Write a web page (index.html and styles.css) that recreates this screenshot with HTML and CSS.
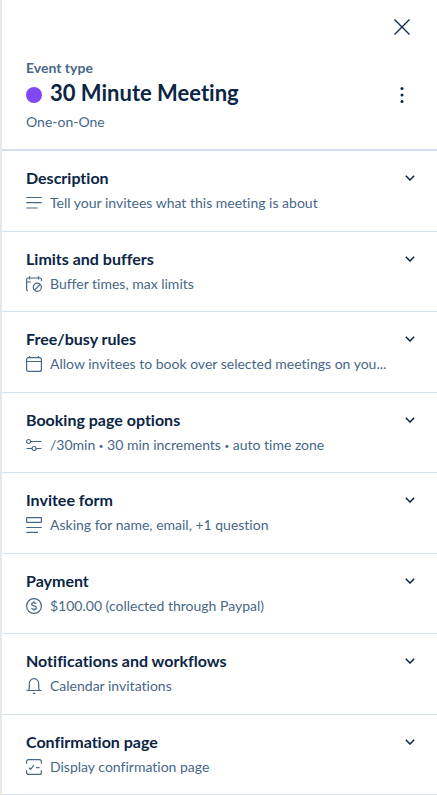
FILE: index.html
```html
<!DOCTYPE html>
<html lang="en">
<head>
<meta charset="utf-8">
<meta name="viewport" content="width=device-width, initial-scale=1">
<title>30 Minute Meeting</title>
<link rel="stylesheet" href="styles.css">
</head>
<body>
<main class="panel">
  <header class="header">
    <div class="toolbar">
      <button class="icon-button" type="button" aria-label="Close">
        <svg class="close-icon" viewBox="0 0 16 16"><path d="M.5.5l15 15M15.5.5l-15 15"/></svg>
      </button>
    </div>
    <p class="eyebrow">Event type</p>
    <div class="title-row">
      <span class="dot"></span>
      <h1 class="title">30 Minute Meeting</h1>
      <button class="icon-button" type="button" aria-label="More options">
        <svg class="more-icon" viewBox="0 0 4 16"><circle cx="2" cy="1.600" r="1.500"/><circle cx="2" cy="8" r="1.500"/><circle cx="2" cy="14.400" r="1.500"/></svg>
      </button>
    </div>
    <p class="kind">One-on-One</p>
  </header>
  <div class="sections">
    <button class="section" type="button" aria-expanded="false">
      <span class="name">Description</span>
      <svg class="chevron" viewBox="0 0 10 6"><path d="M.8.8L5 5 9.200.8"/></svg>
      <span class="summary">
        <svg class="icon" viewBox="0 0 16 16"><path d="M.3 2.500h15.400M.3 7.700h15.400M.3 13h11.400"/></svg>
        <span class="text">Tell your invitees what this meeting is about</span>
      </span>
    </button>
    <button class="section" type="button" aria-expanded="false">
      <span class="name">Limits and buffers</span>
      <svg class="chevron" viewBox="0 0 10 6"><path d="M.8.8L5 5 9.200.8"/></svg>
      <span class="summary">
        <svg class="icon" viewBox="0 0 16 16"><path d="M2 14.600Q.6 14.600.6 13V3.500Q.6 2 2 2h12Q15.400 2 15.400 3.500V5M3.500.3V3.500M12.500.3V3.500M.6 6H5"/><circle cx="11.300" cy="11.300" r="4.100"/><path d="M8.500 14.100l5.600-5.600"/></svg>
        <span class="text">Buffer times, max limits</span>
      </span>
    </button>
    <button class="section" type="button" aria-expanded="false">
      <span class="name">Free/busy rules</span>
      <svg class="chevron" viewBox="0 0 10 6"><path d="M.8.8L5 5 9.200.8"/></svg>
      <span class="summary">
        <svg class="icon" viewBox="0 0 16 16"><rect x=".6" y="1.600" width="14.800" height="13.800" rx="2"/><path d="M.6 5.500h14.800M3.500 0v2M12.500 0v2"/></svg>
        <span class="text">Allow invitees to book over selected meetings on you...</span>
      </span>
    </button>
    <button class="section" type="button" aria-expanded="false">
      <span class="name">Booking page options</span>
      <svg class="chevron" viewBox="0 0 10 6"><path d="M.8.8L5 5 9.200.8"/></svg>
      <span class="summary">
        <svg class="icon" viewBox="0 0 16 16"><circle cx="2.600" cy="4.500" r="2"/><path d="M4.600 4.500H15.500M.5 11.500h5.500M10 11.500h5.500"/><circle cx="8" cy="11.500" r="2"/></svg>
        <span class="text">/30min <span class="bullet">•</span> 30 min increments <span class="bullet">•</span> auto time zone</span>
      </span>
    </button>
    <button class="section" type="button" aria-expanded="false">
      <span class="name">Invitee form</span>
      <svg class="chevron" viewBox="0 0 10 6"><path d="M.8.8L5 5 9.200.8"/></svg>
      <span class="summary">
        <svg class="icon" viewBox="0 0 16 16"><rect x=".6" y=".6" width="14.800" height="4.800" rx=".5"/><path d="M.3 10.500h15.400M.3 15.400h11.700"/></svg>
        <span class="text">Asking for name, email, +1 question</span>
      </span>
    </button>
    <button class="section" type="button" aria-expanded="false">
      <span class="name">Payment</span>
      <svg class="chevron" viewBox="0 0 10 6"><path d="M.8.8L5 5 9.200.8"/></svg>
      <span class="summary">
        <svg class="icon" viewBox="0 0 16 16"><circle cx="8" cy="8" r="7.400"/><path d="M10.300 5.900C10 5 9.200 4.600 8 4.600c-1.400 0-2.300.6-2.300 1.600C5.700 8.600 10.400 7.300 10.400 9.700c0 1-.9 1.700-2.400 1.700-1.300 0-2.200-.5-2.500-1.400M8 3.300v1.300M8 11.400v1.300"/></svg>
        <span class="text">$100.00 (collected through Paypal)</span>
      </span>
    </button>
    <button class="section" type="button" aria-expanded="false">
      <span class="name">Notifications and workflows</span>
      <svg class="chevron" viewBox="0 0 10 6"><path d="M.8.8L5 5 9.200.8"/></svg>
      <span class="summary">
        <svg class="icon" viewBox="0 0 16 16"><path d="M.5 12.500h15M2.500 12.500Q3.300 11.500 3.300 9V5.400a4.700 4.700 0 0 1 9.400 0V9q0 2.500.8 3.500M6.800 15q1.200 1 2.400 0"/></svg>
        <span class="text">Calendar invitations</span>
      </span>
    </button>
    <button class="section" type="button" aria-expanded="false">
      <span class="name">Confirmation page</span>
      <svg class="chevron" viewBox="0 0 10 6"><path d="M.8.8L5 5 9.200.8"/></svg>
      <span class="summary">
        <svg class="icon" viewBox="0 0 16 16"><path d="M.6 4.800V2.600q0-2 2-2h10.800q2 0 2 2v2.200M.6 11.200v2.200q0 2 2 2h10.800q2 0 2-2v-2.200M2.800 8.600l1.800 1.800L8 6M10 8.700h3.500"/></svg>
        <span class="text">Display confirmation page</span>
      </span>
    </button>
  </div>
</main>
</body>
</html>
```
FILE: styles.css
```css
* {
  box-sizing: border-box;
}

body {
  margin: 0;
  background: #fff;
  color: #0b2545;
  font-family: Lato, sans-serif;
  font-size: 14px;
  line-height: 20px;
  font-variant-ligatures: none;
}

.panel {
  display: flex;
  flex-direction: column;
  min-height: 100vh;
  border-left: 2px solid #e8e9eb;
}

.header {
  padding: 16px 24px 17px;
  border-bottom: 2px solid #d4e0ed;
}

.toolbar {
  display: flex;
  justify-content: flex-end;
  margin-bottom: 20px;
}

.icon-button {
  display: flex;
  align-items: center;
  justify-content: center;
  width: 22px;
  height: 22px;
  padding: 0;
  border: 0;
  background: none;
  color: inherit;
  cursor: pointer;
}

svg {
  flex: none;
  fill: none;
  stroke: currentColor;
}

.close-icon {
  width: 16px;
  height: 16px;
  stroke-width: 1.3;
}

.more-icon {
  width: 4px;
  height: 16px;
  fill: currentColor;
  stroke: none;
}

.eyebrow,
.kind {
  margin: 0;
  color: #476788;
}

.eyebrow {
  font-weight: 700;
}

.title-row {
  display: flex;
  align-items: center;
  gap: 8px;
  height: 34px;
}

.dot {
  flex: none;
  width: 16px;
  height: 16px;
  border-radius: 50%;
  background: #8247f5;
}

.title {
  flex: 1;
  margin: 0;
  padding-bottom: 4px;
  font-size: 22px;
  line-height: 28px;
}

.sections {
  display: grid;
  flex: 1;
  grid-auto-rows: 1fr;
}

.section {
  display: grid;
  grid-template-columns: 1fr auto;
  align-content: center;
  align-items: center;
  gap: 5px;
  padding: 0 22px 0 24px;
  border: 0;
  border-bottom: 1px solid #d4e0ed;
  background: none;
  color: inherit;
  font: inherit;
  text-align: left;
  cursor: pointer;
}

.name {
  font-size: 16px;
  font-weight: 700;
}

.chevron {
  width: 10px;
  height: 6px;
  stroke-width: 1.5;
}

.summary {
  display: flex;
  grid-column: 1 / -1;
  align-items: center;
  gap: 8px;
  color: #476788;
}

.icon {
  width: 16px;
  height: 16px;
  stroke-width: 1.2;
}

.text {
  white-space: nowrap;
}

.bullet {
  font-size: 8px;
  line-height: 1;
  vertical-align: middle;
}
```
